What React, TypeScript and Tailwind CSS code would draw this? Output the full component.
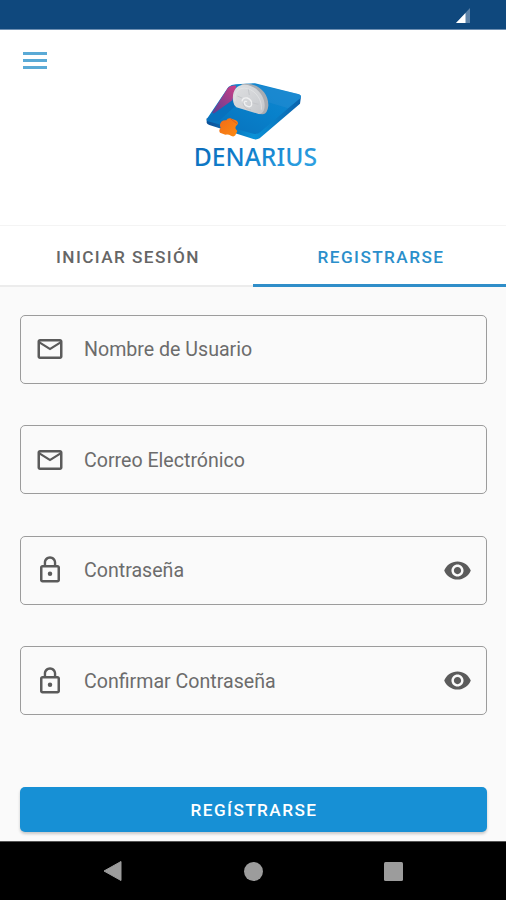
import React from "react";

function Logo() {
  return (
    <svg className="h-[110px] w-[150px]" viewBox="0 0 450 330" role="img" aria-label="Denarius">
      <defs>
        <linearGradient id="board" x1="0" y1="1" x2="1" y2="0">
          <stop offset="0" stopColor="#0870bb" />
          <stop offset="0.55" stopColor="#0881cb" />
          <stop offset="1" stopColor="#1489d2" />
        </linearGradient>
        <linearGradient id="edge" x1="0" y1="0" x2="1" y2="0">
          <stop offset="0" stopColor="#0c4f97" />
          <stop offset="0.5" stopColor="#0992d8" />
          <stop offset="1" stopColor="#0b62ac" />
        </linearGradient>
        <linearGradient id="magenta" x1="1" y1="0" x2="0" y2="1">
          <stop offset="0" stopColor="#cf3e86" />
          <stop offset="1" stopColor="#593f92" />
        </linearGradient>
        <linearGradient id="coin" x1="0" y1="0" x2="1" y2="1">
          <stop offset="0" stopColor="#dedfe1" />
          <stop offset="0.6" stopColor="#d0d2d5" />
          <stop offset="1" stopColor="#c3c5c9" />
        </linearGradient>
        <linearGradient id="orange" x1="0" y1="0" x2="1" y2="1">
          <stop offset="0" stopColor="#f26b18" />
          <stop offset="1" stopColor="#fb8b12" />
        </linearGradient>
        <linearGradient id="word" x1="0" y1="0" x2="1" y2="0.5">
          <stop offset="0" stopColor="#0c66b4" />
          <stop offset="0.5" stopColor="#0f7ecb" />
          <stop offset="1" stopColor="#2c9fe0" />
        </linearGradient>
      </defs>
      <path d="M80 145 L80 158 Q81 162 88 165 L220 207 Q230 210 239 205 L360 101 L363 80 L230 190Z" fill="url(#edge)" />
      <path d="M145 51 Q154 43 168 43 L225 40 L357 73 Q367 77 361 84 L240 187 Q232 195 220 191 L84 154 Q76 151 83 143Z" fill="url(#board)" />
      <path d="M215 40 L357 73 Q367 77 361 84 L324 115 L262 96Z" fill="#268bd1" opacity="0.5" />
      <path d="M96 128 L143 55 Q151 45 169 47 L156 94 L110 135Z" fill="url(#magenta)" />
      <path d="M83 144 L157 91 L169 105 L116 153 L84 154Z" fill="#0871bd" />
      <path d="M183 43 C220 33 267 60 265 107 Q263 129 249 133 L235 132 L231 75Z" fill="#a8acb2" />
      <path d="M160 97 C154 65 168 43 194 44 C231 45 260 84 253 116 Q249 132 236 132 L169 112 Q162 108 160 97Z" fill="url(#coin)" />
      <path d="M165 94 C162 65 178 49 203 56 C230 64 247 92 244 119" fill="none" stroke="#e6e7e9" strokeWidth="2" />
      <path d="M205 58 L208 75 M172 78 L188 85 M211 97 L235 103" stroke="#c1c3c6" strokeWidth="2.5" />
      <path d="M186 94 Q188 81 202 84 Q216 89 215 103 Q213 113 203 109 Q193 106 193 98 Q194 92 201 95" fill="none" stroke="#eff0f1" strokeWidth="4" />
      <path d="M189 100 Q194 119 213 119" fill="none" stroke="#c0c2c5" strokeWidth="2.5" />
      <path d="M124 155 Q130 150 139 151 Q142 144 151 145 L163 149 Q173 151 174 160 Q173 165 168 168 Q165 172 167 177 L172 183 L166 196 Q161 202 153 197 Q145 192 136 194 L120 188 Q115 181 122 174 Q117 163 124 155Z" fill="url(#orange)" />
      <path d="M151 146 L171 161" fill="none" stroke="#df611b" strokeWidth="3" />
      <text x="41" y="288" textLength="370" lengthAdjust="spacingAndGlyphs" fontSize="77" fontWeight="500" fontFamily="'Noto Sans', 'Open Sans', sans-serif" fill="url(#word)">DENARIUS</text>
    </svg>
  );
}

function MailIcon() {
  return (
    <svg className="size-[30px] shrink-0" viewBox="0 0 24 24" fill="#5b5b5b">
      <path d="M20 4H4c-1.1 0-2 .9-2 2v12c0 1.1.9 2 2 2h16c1.1 0 2-.9 2-2V6c0-1.1-.9-2-2-2zm0 14H4V8l8 5 8-5v10zm-8-7L4 6h16l-8 5z" />
    </svg>
  );
}

function LockIcon() {
  return (
    <svg className="size-[30px] shrink-0" viewBox="0 0 24 24" fill="#5b5b5b">
      <path d="M18 8h-1V6c0-2.76-2.24-5-5-5S7 3.24 7 6v2H6c-1.1 0-2 .9-2 2v10c0 1.1.9 2 2 2h12c1.1 0 2-.9 2-2V10c0-1.1-.9-2-2-2zM8.9 6c0-1.71 1.39-3.1 3.1-3.1s3.1 1.39 3.1 3.1v2H8.9V6zM18 20H6V10h12v10z" />
      <circle cx="12" cy="15" r="1.8" />
    </svg>
  );
}

function EyeIcon() {
  return (
    <svg className="size-[29px] shrink-0" viewBox="0 0 24 24" fill="#5b5b5b">
      <path d="M12 4.5C7 4.5 2.73 7.61 1 12c1.73 4.39 6 7.5 11 7.5s9.27-3.11 11-7.5c-1.73-4.39-6-7.5-11-7.5zM12 17c-2.76 0-5-2.24-5-5s2.24-5 5-5 5 2.24 5 5-2.24 5-5 5zm0-8c-1.66 0-3 1.34-3 3s1.34 3 3 3 3-1.34 3-3-1.34-3-3-3z" />
    </svg>
  );
}

function Field({ label, secret = false }: { label: string; secret?: boolean }) {
  return (
    <label className="flex h-[69px] items-center rounded-[5px] border-[1.5px] border-[#9c9c9c] pr-[14px] pl-[14px]">
      {secret ? <LockIcon /> : <MailIcon />}
      <span className="ml-[19.5px] flex-1 pt-[2px] text-[19.6px] leading-6 text-[#6c6c6c]">{label}</span>
      {secret && <EyeIcon />}
    </label>
  );
}

export default function App() {
  return (
    <div className="flex h-[900px] w-[506px] flex-col overflow-hidden bg-[#fafafa] font-['Roboto',sans-serif]">
      <div className="flex h-[30px] shrink-0 justify-end border-b border-[#6e8fb2] bg-[#0f487d] pt-2 pr-[35px]">
        <svg className="h-[16px] w-[16px]" viewBox="0 0 16 16">
          <path d="M1 15 L15 0 V15Z" fill="#5c82a8" />
          <path d="M1 15 L10.5 5 V15Z" fill="#fff" />
        </svg>
      </div>

      <header className="flex h-[195px] shrink-0 items-start bg-white">
        <button className="mt-[22px] ml-[23px] flex w-[24px] flex-col gap-[4px]" aria-label="Menú">
          <span className="h-[3px] w-full bg-[#5aaad6]" />
          <span className="h-[3px] w-full bg-[#5aaad6]" />
          <span className="h-[3px] w-full bg-[#5aaad6]" />
        </button>
        <div className="mt-10 ml-[133px]">
          <Logo />
        </div>
      </header>

      <nav className="grid h-[62px] shrink-0 grid-cols-2 border-t border-[#f4f4f4] bg-white text-center text-[17.2px] font-medium tracking-[1.42px]">
        <div className="border-b-2 border-[#ececec] pt-[19px] pl-[3px] leading-6 text-[#666]">INICIAR SESIÓN</div>
        <div className="border-b-3 border-[#2f8ec9] pt-[19px] pl-[3px] leading-6 text-[#2b8fcb]">REGISTRARSE</div>
      </nav>

      <main className="flex flex-1 flex-col px-[19.5px] pt-[27.5px]">
        <div className="flex flex-col gap-[41.6px]">
          <Field label="Nombre de Usuario" />
          <Field label="Correo Electrónico" />
          <Field label="Contraseña" secret />
          <Field label="Confirmar Contraseña" secret />
        </div>
        <button className="mt-[71.5px] h-[45px] rounded-[5px] bg-[#1790d5] pt-[3px] pl-[2px] text-[17.2px] font-medium tracking-[1.42px] text-white shadow-[0_2px_3px_rgba(0,0,0,0.2)]">
          REGÍSTRARSE
        </button>
      </main>

      <footer className="flex h-[59px] shrink-0 items-center border-t border-[#555] bg-black pl-[103px]">
        <svg className="h-[22px] w-[19px]" viewBox="0 0 19 22">
          <path d="M18 1.5 V20.5 L1 11Z" fill="#9c9c9c" stroke="#9c9c9c" strokeWidth="1" strokeLinejoin="round" />
        </svg>
        <span className="ml-[122px] size-[19px] rounded-full bg-[#9c9c9c]" />
        <span className="ml-[121px] size-[19px] rounded-[1.5px] bg-[#9c9c9c]" />
      </footer>
    </div>
  );
}
